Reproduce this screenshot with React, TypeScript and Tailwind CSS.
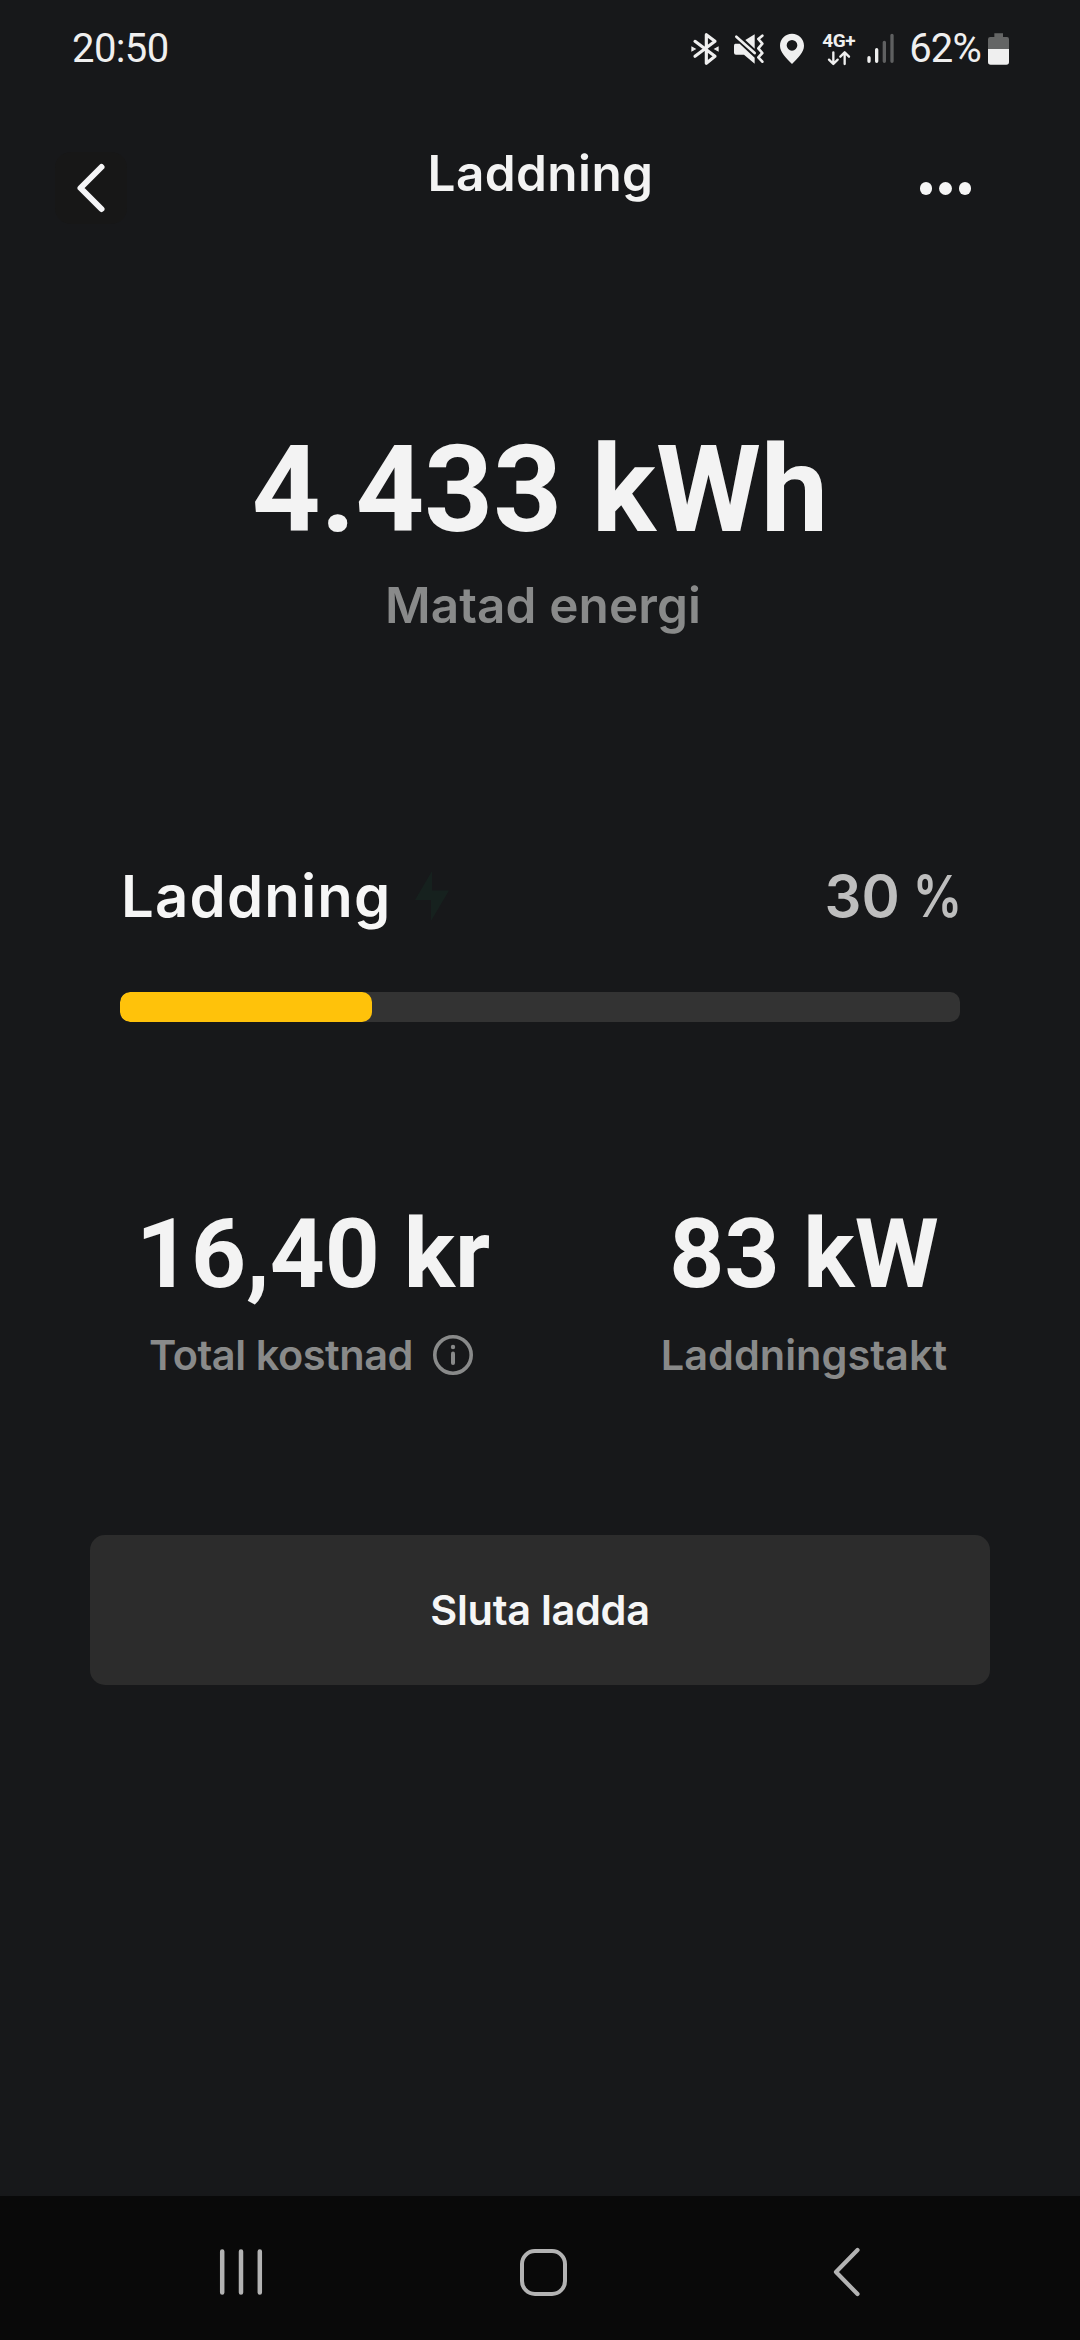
const CHARGE_PERCENT = 30;

function StatusBar() {
  return (
    <div className="flex h-24 items-center justify-between pl-[72px] pr-[70px] pt-px font-[Roboto] text-[#efefef]">
      <div className="text-[40px] leading-[48px] tracking-[-0.6px]">20:50</div>
      <div className="flex items-center">
        <svg className="h-9 w-[30px]" viewBox="60 60 90 108" fill="none" stroke="#efefef">
          <path
            d="M75 91 L135 136 L109 157 V71 L135 91 L75 136"
            strokeWidth="9.5"
            strokeLinecap="round"
            strokeLinejoin="round"
          />
          <path d="M66 109 L75 114 L66 119Z M144 109 L135 114 L144 119Z" fill="#efefef" strokeWidth="4" />
        </svg>
        <svg className="ml-3 h-9 w-[34px]" viewBox="186 60 102 108" fill="#efefef">
          <path d="M196 98 H209 L254 140 V158 L222 131 H198 Q192 131 192 125 V104 Q192 98 196 98Z" />
          <path d="M226 87 L254 70 V113Z" />
          <path d="M199 77 L254 126" stroke="#efefef" strokeWidth="8" strokeLinecap="round" />
          <path
            d="M277 74 L265 84 L277 98 L265 112 L277 126 L265 139 L277 152"
            fill="none"
            stroke="#efefef"
            strokeWidth="8"
            strokeLinecap="round"
            strokeLinejoin="round"
          />
        </svg>
        <svg className="ml-[13px] h-9 w-[26px]" viewBox="327 60 78 108" fill="#efefef">
          <path
            fillRule="evenodd"
            d="M366 68 C386 68 402 84 402 104 C402 124 384 140 366 159 C348 140 330 124 330 104 C330 84 346 68 366 68Z M366 87 A16 16 0 1 0 366 119 A16 16 0 1 0 366 87Z"
          />
        </svg>
        <div className="ml-4 flex h-9 w-[35px] flex-col items-center">
          <span className="h-[19px] text-[19px] font-bold leading-[19px] tracking-[-0.5px]">4G+</span>
          <svg
            className="h-[16px] w-[26px]"
            viewBox="0 0 78 48"
            fill="none"
            stroke="#efefef"
            strokeWidth="7"
            strokeLinecap="round"
            strokeLinejoin="round"
          >
            <path d="M22 7 V41 M9 29 L22 42 L35 29" />
            <path d="M56 42 V7 M43 20 L56 7 L69 20" />
          </svg>
        </div>
        <svg
          className="ml-[10px] h-9 w-[30px]"
          viewBox="588 60 90 108"
          stroke="#efefef"
          strokeWidth="10"
          strokeLinecap="round"
        >
          <path d="M597 140 V151 M620 116 V151" />
          <path d="M643 94 V151 M666 73 V151" stroke="#5f6061" />
        </svg>
        <span className="ml-[13px] text-[40px] leading-[48px] tracking-[-0.8px]">62%</span>
        <svg className="ml-[6px] h-9 w-[23px]" viewBox="948 60 69 108">
          <path d="M970 67 H996 V78 H1008 Q1014 78 1014 85 V114 H951 V85 Q951 78 958 78 H970Z" fill="#646565" />
          <path d="M951 114 H1014 V153 Q1014 161 1006 161 H959 Q951 161 951 153Z" fill="#efefef" />
        </svg>
      </div>
    </div>
  );
}

function Header() {
  return (
    <div className="grid grid-cols-[1fr_auto_1fr] items-start pl-[55px] pr-[54px]">
      <button className="mt-14 flex size-[72px] items-center justify-center rounded-2xl bg-[#171717]">
        <svg
          className="size-[56px]"
          viewBox="0 0 56 56"
          fill="none"
          stroke="#f5f5f7"
          strokeWidth="6"
          strokeLinecap="round"
          strokeLinejoin="round"
        >
          <path d="M38.5 7 L17.5 28 L38.5 49" />
        </svg>
      </button>
      <h1 className="mt-[47px] text-[49.5px] font-[560] leading-[60px] tracking-[0.4px] text-[#f3f3f3]">Laddning</h1>
      <button className="mr-[55px] mt-[86px] flex gap-[7px] justify-self-end">
        <span className="size-[12.5px] rounded-full bg-[#f5f5f5]" />
        <span className="size-[12.5px] rounded-full bg-[#f5f5f5]" />
        <span className="size-[12.5px] rounded-full bg-[#f5f5f5]" />
      </button>
    </div>
  );
}

function NavBar() {
  return (
    <div className="mt-auto grid h-36 grid-cols-[302px_302px_302px] items-center justify-items-center bg-[#090909] pl-[90px] pt-2">
      <svg className="h-[48px] w-[44px]" viewBox="0 0 44 48" stroke="#b3b3b3" strokeWidth="4.5" strokeLinecap="round">
        <path d="M3.2 3.5 V44.5 M22 3.5 V44.5 M40.8 3.5 V44.5" />
      </svg>
      <div className="size-[47px] rounded-[15px] border-[4.5px] border-[#b3b3b3]" />
      <svg
        className="ml-px size-[52px]"
        viewBox="0 0 52 52"
        fill="none"
        stroke="#b3b3b3"
        strokeWidth="4.2"
        strokeLinecap="round"
        strokeLinejoin="round"
      >
        <path d="M37.5 4 L16 26 L37.5 48" />
      </svg>
    </div>
  );
}

export default function App() {
  return (
    <div className="flex h-[2340px] w-[1080px] flex-col bg-[#17181a] font-[Inter,sans-serif]">
      <StatusBar />
      <Header />

      <div className="mt-[196px] flex flex-col items-center">
        <div className="font-[Roboto] text-[120px] font-bold leading-[140px] text-[#f3f3f3]">4.433 kWh</div>
        <div className="mt-[15px] pl-[6px] text-[49.5px] font-[560] leading-[60px] tracking-[0.1px] text-[#898a8a]">
          Matad energi
        </div>
      </div>

      <div className="mt-[225px] px-[120px]">
        <div className="flex h-[72px] items-center justify-between text-[58px] font-[560] leading-[72px]">
          <div className="flex items-center pl-px tracking-[1.2px] text-[#f6f6f6]">
            Laddning
            <svg className="ml-[23px] h-[50px] w-[34px]" viewBox="0 0 34 50" fill="#16211e">
              <path d="M17 0 V19.5 H34 L16 50 V29 H0Z" />
            </svg>
          </div>
          <div className="-mr-[2px] flex gap-[4px] text-[#bebebe]">
            <span>{CHARGE_PERCENT}</span>
            <span className="origin-right scale-x-[0.85]">%</span>
          </div>
        </div>
        <div className="mt-[60px] h-[30px] overflow-hidden rounded-[10px] bg-[#333333]">
          <div className="h-full rounded-[10px] bg-[#ffc20a]" style={{ width: `${CHARGE_PERCENT}%` }} />
        </div>
      </div>

      <div className="mt-[176px] flex justify-between px-[120px]">
        <div className="flex w-[386px] flex-col items-center">
          <div className="font-[Roboto] text-[96px] font-bold leading-[112px] text-[#f3f3f3]">16,40 kr</div>
          <div className="mr-1 mt-5 flex items-center text-[41.5px] font-[560] leading-[50px] tracking-[-0.45px] text-[#898a8a]">
            Total kostnad
            <svg className="ml-[20px] size-10" viewBox="0 0 40 40" fill="none" stroke="#898a8a" strokeLinecap="round">
              <circle cx="20" cy="20" r="18.2" strokeWidth="3.6" />
              <path d="M20 18.5 V28" strokeWidth="4" />
              <circle cx="20" cy="12" r="2.2" fill="#898a8a" stroke="none" />
            </svg>
          </div>
        </div>
        <div className="flex w-[312px] flex-col items-center">
          <div className="font-[Roboto] text-[96px] font-bold leading-[112px] text-[#f3f3f3]">83 kW</div>
          <div className="mt-5 text-[41.5px] font-[560] leading-[50px] text-[#898a8a]">Laddningstakt</div>
        </div>
      </div>

      <button className="mx-[90px] mt-[155px] h-[150px] rounded-[15px] bg-[#2c2c2c] text-[41.5px] font-[560] tracking-[-0.3px] text-[#f6f6f6]">
        Sluta ladda
      </button>

      <NavBar />
    </div>
  );
}
